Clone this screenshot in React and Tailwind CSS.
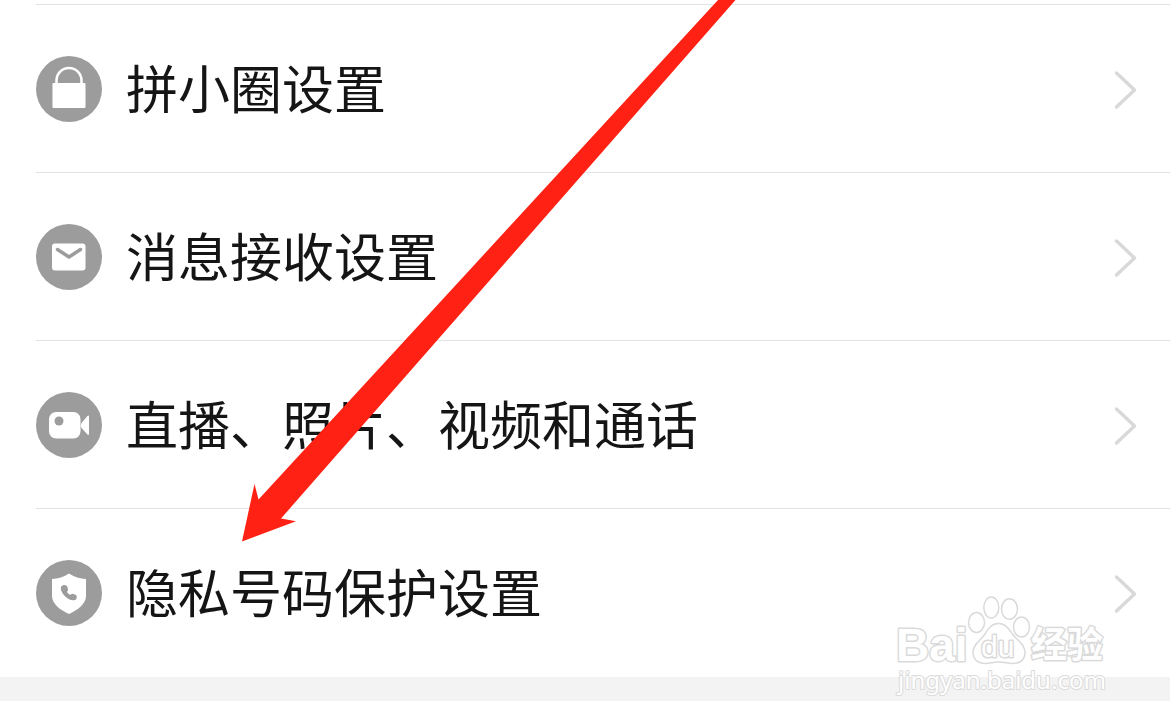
import React from 'react';

const LockIcon = () => (
    <svg viewBox="0 0 66 66" className="size-full" aria-hidden="true">
        <path d="M20.500 30V24.500a12.500 12.500 0 0 1 25 0V30" fill="none" stroke="#fff" strokeWidth="2.500" />
        <rect x="16.500" y="27" width="33" height="25" rx="1" fill="#fff" />
    </svg>
);

const MailIcon = () => (
    <svg viewBox="0 0 66 66" className="size-full" aria-hidden="true">
        <rect x="16" y="19.500" width="33.500" height="27" rx="3" fill="#fff" />
        <path d="M21.500 25.500 33 33l11.500-7.500" fill="none" stroke="#9c9c9c" strokeWidth="3.500" strokeLinecap="round" strokeLinejoin="round" />
    </svg>
);

const CameraIcon = () => (
    <svg viewBox="0 0 66 66" className="size-full" aria-hidden="true">
        <rect x="13" y="20" width="31.500" height="26.500" rx="7" fill="#fff" />
        <circle cx="23" cy="29" r="4.500" fill="#9c9c9c" />
        <path d="M45.500 31 51 24.500q2-2 2 .5v16.500q0 2.500-2 .5l-5.500-6q-1.500-2.500 0-5z" fill="#fff" />
    </svg>
);

const ShieldIcon = () => (
    <svg viewBox="0 0 66 66" className="size-full" aria-hidden="true">
        <path d="M33 13.500c5 3.500 11 5 17 5.500v17c0 8-9 14.500-17 18-8-3.500-17-10-17-18V19c6-.5 12-2 17-5.500z" fill="#fff" />
        <path
            d="M26.500 25.500c2-.9 4.300-.2 4.900 1.600l.6 2.400c.2 1-.4 1.700-1.100 2.200.8 1.500 1.900 2.500 3.500 3.200.7-.8 1.500-1.300 2.700-1l2 .7c1.900.7 2.100 2.900 1.200 4.300-1.500 2-4.800 1.800-7.700.1-3.500-2-6.200-5-7.400-8.400-.7-2.300-.5-4.200 1.300-5.100z"
            fill="#9c9c9c"
        />
    </svg>
);

const Chevron = () => (
    <svg viewBox="0 0 24 42" className="h-[42px] w-6 shrink-0" aria-hidden="true">
        <path d="m2.500 5 18 17-18 17" fill="none" stroke="#d9d9d9" strokeWidth="3.500" strokeLinecap="round" strokeLinejoin="round" />
    </svg>
);

const rows = [
    { id: 'circle', label: '拼小圈设置', Icon: LockIcon },
    { id: 'message', label: '消息接收设置', Icon: MailIcon },
    { id: 'media', label: '直播、照片、视频和通话', Icon: CameraIcon },
    { id: 'privacy', label: '隐私号码保护设置', Icon: ShieldIcon },
];

function SettingRow({ id, label, Icon }) {
    return (
        <li className="border-t border-[#e3e3e3]">
            <a href={`#${id}`} className="flex h-[167px] items-center pr-8">
                <span className="size-[66px] shrink-0 rounded-full bg-[#9c9c9c]">
                    <Icon />
                </span>
                <span className="ml-6 flex-1 pb-1 text-[52px] leading-[60px] text-[#151515]">{label}</span>
                <Chevron />
            </a>
        </li>
    );
}

function Pointer() {
    return (
        <svg viewBox="0 0 760 560" className="pointer-events-none absolute top-0 left-0 h-[560px] w-[760px]" aria-hidden="true">
            <path d="M718 0h17.500L281 518.500l15 2.700-54 20.300 12.500-57.500 4 15.500z" fill="#ff2113" />
        </svg>
    );
}

function Watermark() {
    return (
        <svg
            viewBox="0 0 290 162"
            className="pointer-events-none absolute top-[560px] right-0 h-[162px] w-[290px]"
            role="img"
            aria-label="Baidu 经验"
        >
            <g fill="#fff" stroke="#dadada" strokeWidth="1.500">
                <ellipse cx="96.500" cy="62.500" rx="8" ry="10" />
                <ellipse cx="111.300" cy="47.500" rx="7.500" ry="10.500" />
                <ellipse cx="129.500" cy="49" rx="8" ry="10.300" />
                <ellipse cx="141.500" cy="67" rx="8" ry="10" />
                <path d="M118.500 63.500c7 0 10.500 5.500 14 10.500 4 6 12.500 10 12.500 18.500 0 7.500-5 11-12 11-5 0-9-1.500-14.500-1.500s-8 1.500-13 1.500c-7.500 0-12.500-4-12.500-11 0-8.500 8-12 12-18.500 3.500-5.500 6.500-10.500 13.500-10.500z" />
            </g>
            <g fill="#fff" stroke="#dadada" strokeWidth="3" strokeLinejoin="round" paintOrder="stroke">
                <text x="16" y="101" className="font-['Liberation_Sans',sans-serif] text-[46px] font-bold">Bai</text>
                <text x="101" y="97" className="font-['Liberation_Sans',sans-serif] text-[30px]">du</text>
                <text x="151" y="98" className="font-['Noto_Sans_CJK_SC',sans-serif] text-[36px] font-bold">经验</text>
                <text x="18" y="129" strokeWidth="2" className="font-['Noto_Sans',sans-serif] text-[24px]">jingyan.baidu.com</text>
            </g>
        </svg>
    );
}

export default function App() {
    return (
        <main className="relative min-h-screen overflow-hidden bg-white pt-1 font-['Noto_Sans_CJK_SC',sans-serif]">
            <ul className="ml-9">
                {rows.map(row => (
                    <SettingRow key={row.id} {...row} />
                ))}
            </ul>
            <div className="mt-px h-6 bg-[#f3f3f3]" />
            <Pointer />
            <Watermark />
        </main>
    );
}
